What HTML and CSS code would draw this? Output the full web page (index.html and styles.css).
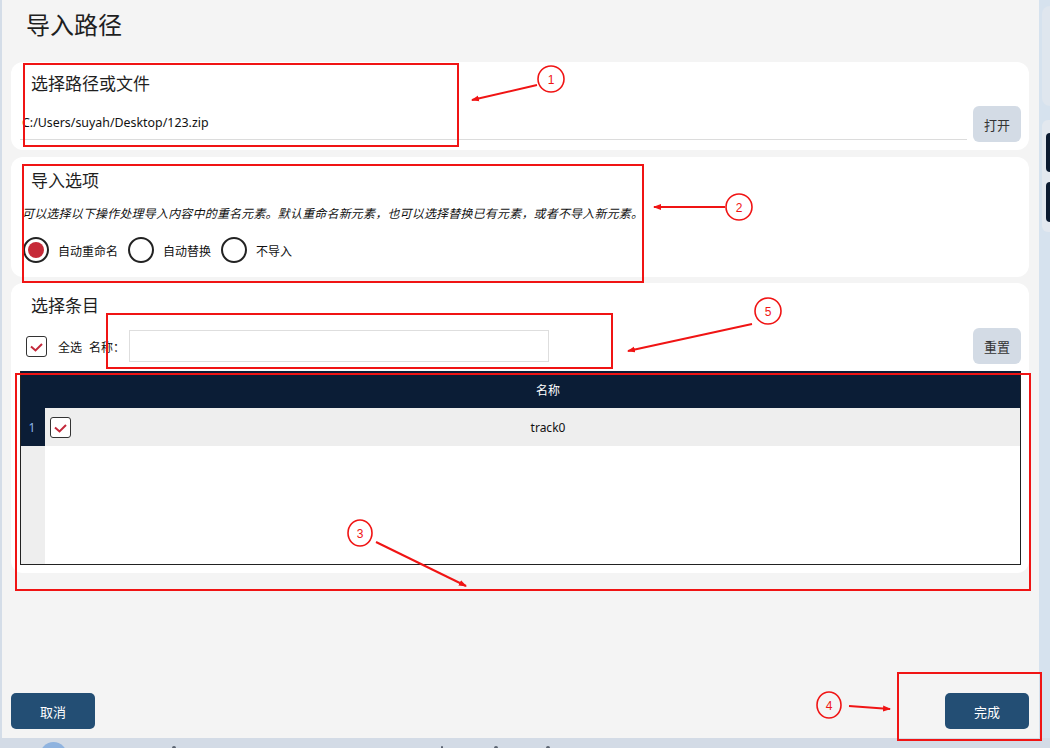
FILE: index.html
```html
<!DOCTYPE html>
<html lang="zh-CN">
<head>
<meta charset="utf-8">
<title>导入路径</title>
<link rel="stylesheet" href="styles.css">
</head>
<body>
<div class="desk">
  <div class="edge-left"></div>
  <main class="dialog">
    <h1 class="title">导入路径</h1>

    <section class="card card-path">
      <h2 class="card-title">选择路径或文件</h2>
      <div class="path-row">
        <div class="path-field">C:/Users/suyah/Desktop/123.zip</div>
        <button class="btn-light">打开</button>
      </div>
    </section>

    <section class="card card-options">
      <h2 class="card-title">导入选项</h2>
      <p class="hint">可以选择以下操作处理导入内容中的重名元素。默认重命名新元素，也可以选择替换已有元素，或者不导入新元素。</p>
      <div class="radios">
        <label class="radio"><span class="dot checked"></span>自动重命名</label>
        <label class="radio"><span class="dot"></span>自动替换</label>
        <label class="radio"><span class="dot"></span>不导入</label>
      </div>
    </section>

    <section class="card card-items">
      <h2 class="card-title">选择条目</h2>
      <div class="filter-row">
        <span class="check">
          <svg viewBox="0 0 21 21" width="21" height="21"><path d="M5 10.5 L9.5 14.5 L16 8" fill="none" stroke="#c3283a" stroke-width="2"/></svg>
        </span>
        <span class="lbl lbl-all">全选</span>
        <span class="lbl lbl-name">名称：</span>
        <input class="name-input" type="text">
        <span class="spacer"></span>
        <button class="btn-light">重置</button>
      </div>
      <div class="table">
        <div class="th th-idx"></div>
        <div class="th th-chk"></div>
        <div class="th th-name">名称</div>
        <div class="td td-idx">1</div>
        <div class="td td-chk">
          <span class="check">
            <svg viewBox="0 0 21 21" width="21" height="21"><path d="M5 10.5 L9.5 14.5 L16 8" fill="none" stroke="#c3283a" stroke-width="2"/></svg>
          </span>
        </div>
        <div class="td td-name">track0</div>
        <div class="fill-idx"></div>
        <div class="fill-body"></div>
      </div>
    </section>

    <footer class="actions">
      <button class="btn-dark">取消</button>
      <button class="btn-dark">完成</button>
    </footer>
  </main>
  <aside class="side">
    <div class="side-top"><div class="side-card"></div></div>
    <div class="side-mid">
      <div class="side-chip"></div>
      <div class="side-chip tall"></div>
    </div>
  </aside>
</div>
<div class="taskbar">
  <span class="avatar"></span>
  <span class="tick t1"></span>
  <span class="tick t2"></span>
  <span class="tick t3"></span>
  <span class="tick t4"></span>
</div>

<svg class="marks" width="1050" height="748" viewBox="0 0 1050 748">
  <defs>
    <marker id="head" markerWidth="8" markerHeight="8" refX="7" refY="4" orient="auto" markerUnits="userSpaceOnUse">
      <path d="M0 1 L8 4 L0 7 Z" fill="#f01414"/>
    </marker>
  </defs>
  <g fill="none" stroke="#f01414" stroke-width="2">
    <rect x="24" y="64" width="434" height="82"/>
    <rect x="23" y="165" width="620" height="117"/>
    <rect x="107" y="314" width="505" height="54"/>
    <rect x="16" y="374" width="1014" height="216"/>
    <rect x="898" y="673" width="143" height="67"/>
  </g>
  <g fill="none" stroke="#f01414" stroke-width="1.6">
    <circle cx="551" cy="79" r="13"/>
    <circle cx="739" cy="207" r="13"/>
    <circle cx="768" cy="311" r="13"/>
    <ellipse cx="360" cy="533" rx="12" ry="13"/>
    <ellipse cx="829" cy="705" rx="12" ry="13"/>
  </g>
  <g stroke="#f01414" stroke-width="2" marker-end="url(#head)">
    <line x1="537" y1="85" x2="472" y2="100"/>
    <line x1="725" y1="207" x2="654" y2="207"/>
    <line x1="752" y1="324" x2="628" y2="351"/>
    <line x1="376" y1="542" x2="466" y2="586"/>
    <line x1="849" y1="706" x2="890" y2="709"/>
  </g>
  <g class="mark-num" fill="#f01414">
    <text x="551" y="83.5">1</text>
    <text x="739" y="211.5">2</text>
    <text x="768" y="315.5">5</text>
    <text x="360" y="537.5">3</text>
    <text x="829" y="709.5">4</text>
  </g>
</svg>
</body>
</html>
```

FILE: styles.css
```css
* { box-sizing: border-box; }

html, body {
  margin: 0;
  padding: 0;
}

body {
  width: 1050px;
  height: 748px;
  overflow: hidden;
  position: relative;
  font-family: "Noto Sans", "Noto Sans CJK SC", sans-serif;
  color: #222;
  background: #d3dbe6;
}

.desk {
  display: flex;
  height: 738px;
}

.edge-left {
  width: 2px;
  background: #d4dde8;
}

/* dialog body */
.dialog {
  width: 1037px;
  background: #f4f4f4;
  display: flex;
  flex-direction: column;
}

.title {
  margin: 0;
  height: 62px;
  padding: 8px 0 0 24px;
  font-family: "Noto Sans CJK SC", sans-serif;
  font-size: 24px;
  line-height: 32px;
  font-weight: 400;
  color: #1f1f1f;
}

.card {
  background: #fff;
  border-radius: 12px;
  margin: 0 10px 0 9px;
}

.card-title {
  margin: 0;
  font-family: "Noto Sans CJK SC", sans-serif;
  font-size: 17px;
  line-height: 24px;
  font-weight: 400;
  color: #1f1f1f;
  padding-left: 20px;
}

/* path card */
.card-path {
  height: 88px;
  padding: 9px 8px 8px 0;
}

.path-row {
  display: flex;
  align-items: flex-start;
  gap: 6px;
  margin-top: 11px;
  padding-left: 9px;
}

.path-field {
  flex: 1;
  height: 34px;
  line-height: 34px;
  font-size: 12.4px;
  padding-left: 2px;
  border-bottom: 1px solid #dcdcdc;
  color: #111;
}

.btn-light {
  width: 48px;
  height: 36px;
  border: none;
  border-radius: 6px;
  background: #d3dbe5;
  color: #333;
  font-family: "Noto Sans CJK SC", sans-serif;
  font-size: 13px;
  padding: 0;
}

/* options card */
.card-options {
  margin-top: 7px;
  height: 120px;
  padding-top: 11px;
}

.hint {
  margin: 12px 0 0;
  padding-left: 11px;
  font-family: "Noto Sans CJK SC", sans-serif;
  font-size: 12px;
  line-height: 18px;
  letter-spacing: 0.18px;
  font-style: italic;
  color: #111;
  white-space: nowrap;
}

.radios {
  display: flex;
  gap: 10px;
  margin-top: 15px;
  padding-left: 12px;
  height: 26px;
}

.radio {
  display: flex;
  align-items: center;
  gap: 9px;
  font-family: "Noto Sans CJK SC", sans-serif;
  font-size: 12px;
  color: #111;
}

.dot {
  width: 26px;
  height: 26px;
  border: 2px solid #222;
  border-radius: 50%;
  display: flex;
  align-items: center;
  justify-content: center;
}

.dot.checked::after {
  content: "";
  width: 16px;
  height: 16px;
  border-radius: 50%;
  background: #c62a38;
}

/* items card */
.card-items {
  margin-top: 6px;
  height: 290px;
  padding: 10px 8px 8px 9px;
  display: flex;
  flex-direction: column;
}

.card-items .card-title {
  padding-left: 11px;
}

.filter-row {
  display: flex;
  align-items: center;
  height: 36px;
  margin-top: 11px;
  padding-left: 6px;
}

.check {
  width: 21px;
  height: 21px;
  border: 1.5px solid #333;
  border-radius: 3px;
  background: #fff;
  display: inline-flex;
  align-items: center;
  justify-content: center;
}

.check svg {
  display: block;
  flex: none;
}

.lbl {
  font-family: "Noto Sans CJK SC", sans-serif;
  font-size: 12px;
  color: #111;
}

.lbl-all { margin-left: 11px; }
.lbl-name { margin-left: 7px; }

.name-input {
  margin-left: 4px;
  width: 420px;
  height: 32px;
  border: 1px solid #dedede;
  background: #fff;
  outline: none;
}

.spacer { flex: 1; }

.table {
  margin-top: 7px;
  height: 194px;
  display: grid;
  grid-template-columns: 24px 31px 1fr;
  grid-template-rows: 37px 38px 1fr;
  border: 1px solid #222;
  border-top: none;
  font-size: 12px;
}

.th {
  background: #0b1d36;
  color: #fff;
}

.th-name {
  display: flex;
  align-items: center;
  justify-content: center;
  font-family: "Noto Sans CJK SC", sans-serif;
}

.td {
  background: #eeeeee;
  display: flex;
  align-items: center;
}

.td-idx {
  background: #0b1d36;
  color: #8db6ea;
  justify-content: center;
  padding-right: 2px;
}

.td-chk {
  justify-content: flex-start;
  padding-left: 5px;
}

.td-name {
  justify-content: center;
  color: #111;
}

.fill-idx {
  background: #eeeeee;
}

.fill-body {
  grid-column: 2 / 4;
  background: #fff;
}

/* footer buttons */
.actions {
  margin-top: auto;
  display: flex;
  justify-content: space-between;
  padding: 0 10px 9px 9px;
}

.btn-dark {
  width: 84px;
  height: 36px;
  border: none;
  border-radius: 5px;
  background: #234e74;
  color: #fff;
  font-family: "Noto Sans CJK SC", sans-serif;
  font-size: 13px;
  padding: 0;
}

/* desktop strip on the right */
.side {
  width: 11px;
  background: #d6e2ee;
  display: flex;
  flex-direction: column;
  gap: 9px;
}

.side-top {
  height: 111px;
  padding: 6px 0 0 3px;
}

.side-card {
  height: 100px;
  border-radius: 8px 0 0 8px;
  background: #dfe6ee;
}

.side-mid {
  height: 112px;
  margin-left: 3px;
  border-radius: 6px 0 0 6px;
  background: #e3e8ef;
  display: flex;
  flex-direction: column;
  gap: 10px;
  padding: 13px 0 0 4px;
}

.side-chip {
  height: 39px;
  border-radius: 5px 0 0 5px;
  background: #0b1a30;
}

.side-chip.tall { height: 40px; }

/* taskbar along the bottom */
.taskbar {
  position: relative;
  height: 10px;
  background: #d3dbe6;
  overflow: hidden;
}

.avatar {
  position: absolute;
  left: 40px;
  top: 4px;
  width: 27px;
  height: 27px;
  border-radius: 50%;
  background: #8fb3df;
}

.tick {
  position: absolute;
  top: 8px;
  height: 2px;
  width: 4px;
  background: #5a6270;
  border-radius: 2px 2px 0 0;
}

.t1 { left: 172px; }
.t2 { left: 441px; width: 2px; }
.t3 { left: 494px; }
.t4 { left: 546px; }

/* callout overlay */
.marks {
  position: absolute;
  left: 0;
  top: 0;
  pointer-events: none;
}

.mark-num text {
  font-family: "Liberation Sans", sans-serif;
  font-size: 12px;
  text-anchor: middle;
}
```
